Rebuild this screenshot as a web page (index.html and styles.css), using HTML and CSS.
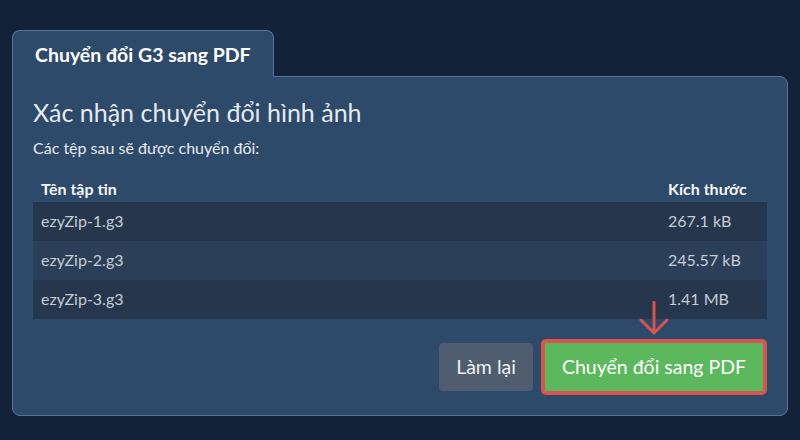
FILE: index.html
```html
<!DOCTYPE html>
<html lang="vi">
<head>
<meta charset="utf-8">
<title>Chuyển đổi G3 sang PDF</title>
<link rel="stylesheet" href="styles.css">
</head>
<body>
<div class="wrap">
  <div class="tab">Chuyển đổi G3 sang PDF</div>
  <div class="panel">
    <h1 class="title">Xác nhận chuyển đổi hình ảnh</h1>
    <p class="subtitle">Các tệp sau sẽ được chuyển đổi:</p>
    <table class="files">
      <thead>
        <tr><th class="c-name">Tên tập tin</th><th class="c-size">Kích thước</th></tr>
      </thead>
      <tbody>
        <tr><td>ezyZip-1.g3</td><td>267.1 kB</td></tr>
        <tr><td>ezyZip-2.g3</td><td>245.57 kB</td></tr>
        <tr><td>ezyZip-3.g3</td><td>1.41 MB</td></tr>
      </tbody>
    </table>
    <div class="actions">
      <button class="btn btn-reset">Làm lại</button>
      <div class="convert-wrap">
        <svg class="arrow" width="30" height="34" viewBox="0 0 30 34" aria-hidden="true">
          <path d="M15 1 V32 M2 19 L15 32 L28 19" fill="none" stroke="#d9534f" stroke-width="3" stroke-linecap="round" stroke-linejoin="round"/>
        </svg>
        <button class="btn btn-convert">Chuyển đổi sang PDF</button>
      </div>
    </div>
  </div>
</div>
</body>
</html>
```
FILE: styles.css
```css
* { box-sizing: border-box; }
html, body {
  margin: 0;
  height: 100%;
  background: #112239;
}
body {
  font-family: Lato, "Open Sans", "Liberation Sans", sans-serif;
  color: #e9edf2;
}
.wrap {
  padding: 30px 12px 0 12px;
}
.tab {
  position: relative;
  z-index: 1;
  display: inline-block;
  width: 262px;
  height: 47px;
  margin-bottom: -1px;
  padding: 12px 0 0 22px;
  background: #2d4a6a;
  border: 1px solid #5a7594;
  border-bottom: none;
  border-radius: 8px 8px 0 0;
  font-size: 19.5px;
  font-weight: 700;
  line-height: 24px;
  color: #ffffff;
}
.panel {
  background: #2d4a6a;
  border: 1px solid #5a7594;
  border-radius: 0 8px 8px 8px;
  padding: 20px 20px 20px 20px;
}
.title {
  margin: 0 0 11px 0;
  font-size: 25px;
  font-weight: 400;
  line-height: 30px;
  color: #e6e9ed;
}
.subtitle {
  margin: 0 0 21px 0;
  font-size: 16px;
  line-height: 20px;
  color: #e6e9ed;
}
.files {
  width: 100%;
  border-collapse: collapse;
  table-layout: fixed;
  font-size: 16px;
}
.files th {
  text-align: left;
  font-weight: 700;
  color: #f4f6f8;
  padding: 0 8px 3px 8px;
  line-height: 20px;
}
.files .c-size { width: 107px; }
.files td {
  padding: 8px 8px 10px 8px;
  line-height: 21px;
  color: #c6ccd5;
}
.files tbody tr:nth-child(odd) { background: #25364d; }
.files tbody tr:nth-child(even) { background: #2b4058; }
.actions {
  display: flex;
  justify-content: flex-end;
  align-items: center;
  gap: 8px;
  margin-top: 20px;
}
.btn {
  font-family: inherit;
  font-size: 19.5px;
  line-height: 24px;
  border: none;
  color: #ffffff;
  cursor: pointer;
}
.btn-reset {
  width: 94px;
  height: 48px;
  padding: 0;
  background: #4f5d6e;
  border-radius: 4px;
  color: #eef1f4;
}
.convert-wrap {
  position: relative;
}
.arrow {
  position: absolute;
  left: 98px;
  top: -38px;
}
.btn-convert {
  display: block;
  width: 226px;
  height: 56px;
  padding: 0;
  background: #5cb85c;
  border: 4px solid #d9534f;
  border-radius: 5px;
}
```
